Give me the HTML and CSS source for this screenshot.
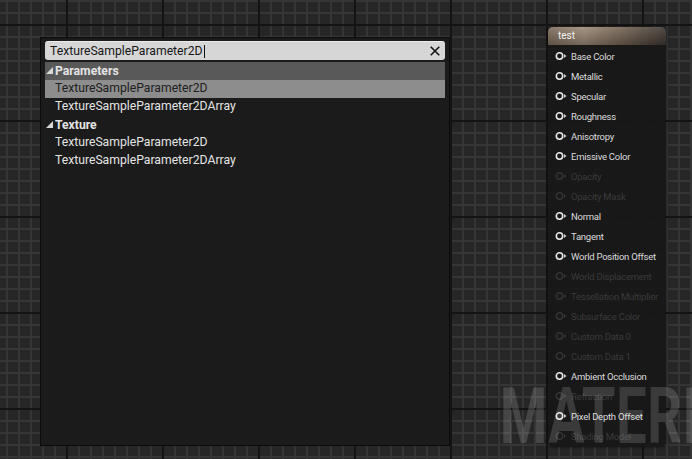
FILE: index.html
```html
<!DOCTYPE html>
<html>
<head>
<meta charset="utf-8">
<link rel="stylesheet" href="styles.css">
</head>
<body>
<div class="canvas">
  <div class="watermark">MATERIAL</div>

  <div class="node">
    <div class="node-title">test</div>
    <div class="node-body">
      <div class="pin on"><svg class="pin-ico" viewBox="0 0 12 10"><circle cx="4.5" cy="5" r="3.2"/><path d="M9 3 L11.5 5 L9 7 Z"/></svg><span>Base Color</span></div>
      <div class="pin on"><svg class="pin-ico" viewBox="0 0 12 10"><circle cx="4.5" cy="5" r="3.2"/><path d="M9 3 L11.5 5 L9 7 Z"/></svg><span>Metallic</span></div>
      <div class="pin on"><svg class="pin-ico" viewBox="0 0 12 10"><circle cx="4.5" cy="5" r="3.2"/><path d="M9 3 L11.5 5 L9 7 Z"/></svg><span>Specular</span></div>
      <div class="pin on"><svg class="pin-ico" viewBox="0 0 12 10"><circle cx="4.5" cy="5" r="3.2"/><path d="M9 3 L11.5 5 L9 7 Z"/></svg><span>Roughness</span></div>
      <div class="pin on"><svg class="pin-ico" viewBox="0 0 12 10"><circle cx="4.5" cy="5" r="3.2"/><path d="M9 3 L11.5 5 L9 7 Z"/></svg><span>Anisotropy</span></div>
      <div class="pin on"><svg class="pin-ico" viewBox="0 0 12 10"><circle cx="4.5" cy="5" r="3.2"/><path d="M9 3 L11.5 5 L9 7 Z"/></svg><span>Emissive Color</span></div>
      <div class="pin off"><svg class="pin-ico" viewBox="0 0 12 10"><circle cx="4.5" cy="5" r="3.2"/><path d="M9 3 L11.5 5 L9 7 Z"/></svg><span>Opacity</span></div>
      <div class="pin off"><svg class="pin-ico" viewBox="0 0 12 10"><circle cx="4.5" cy="5" r="3.2"/><path d="M9 3 L11.5 5 L9 7 Z"/></svg><span>Opacity Mask</span></div>
      <div class="pin on"><svg class="pin-ico" viewBox="0 0 12 10"><circle cx="4.5" cy="5" r="3.2"/><path d="M9 3 L11.5 5 L9 7 Z"/></svg><span>Normal</span></div>
      <div class="pin on"><svg class="pin-ico" viewBox="0 0 12 10"><circle cx="4.5" cy="5" r="3.2"/><path d="M9 3 L11.5 5 L9 7 Z"/></svg><span>Tangent</span></div>
      <div class="pin on"><svg class="pin-ico" viewBox="0 0 12 10"><circle cx="4.5" cy="5" r="3.2"/><path d="M9 3 L11.5 5 L9 7 Z"/></svg><span>World Position Offset</span></div>
      <div class="pin off"><svg class="pin-ico" viewBox="0 0 12 10"><circle cx="4.5" cy="5" r="3.2"/><path d="M9 3 L11.5 5 L9 7 Z"/></svg><span>World Displacement</span></div>
      <div class="pin off"><svg class="pin-ico" viewBox="0 0 12 10"><circle cx="4.5" cy="5" r="3.2"/><path d="M9 3 L11.5 5 L9 7 Z"/></svg><span>Tessellation Multiplier</span></div>
      <div class="pin off"><svg class="pin-ico" viewBox="0 0 12 10"><circle cx="4.5" cy="5" r="3.2"/><path d="M9 3 L11.5 5 L9 7 Z"/></svg><span>Subsurface Color</span></div>
      <div class="pin off"><svg class="pin-ico" viewBox="0 0 12 10"><circle cx="4.5" cy="5" r="3.2"/><path d="M9 3 L11.5 5 L9 7 Z"/></svg><span>Custom Data 0</span></div>
      <div class="pin off"><svg class="pin-ico" viewBox="0 0 12 10"><circle cx="4.5" cy="5" r="3.2"/><path d="M9 3 L11.5 5 L9 7 Z"/></svg><span>Custom Data 1</span></div>
      <div class="pin on"><svg class="pin-ico" viewBox="0 0 12 10"><circle cx="4.5" cy="5" r="3.2"/><path d="M9 3 L11.5 5 L9 7 Z"/></svg><span>Ambient Occlusion</span></div>
      <div class="pin off"><svg class="pin-ico" viewBox="0 0 12 10"><circle cx="4.5" cy="5" r="3.2"/><path d="M9 3 L11.5 5 L9 7 Z"/></svg><span>Refraction</span></div>
      <div class="pin on"><svg class="pin-ico" viewBox="0 0 12 10"><circle cx="4.5" cy="5" r="3.2"/><path d="M9 3 L11.5 5 L9 7 Z"/></svg><span>Pixel Depth Offset</span></div>
      <div class="pin off"><svg class="pin-ico" viewBox="0 0 12 10"><circle cx="4.5" cy="5" r="3.2"/><path d="M9 3 L11.5 5 L9 7 Z"/></svg><span>Shading Model</span></div>
    </div>
  </div>

  <div class="menu">
    <div class="search">
      <span class="search-text">TextureSampleParameter2D</span><span class="caret"></span>
      <svg class="clear" viewBox="0 0 14 14"><path d="M2 2 L12 12 M12 2 L2 12"/></svg>
    </div>
    <div class="list">
      <div class="row header hl"><span class="tri"></span>Parameters</div>
      <div class="row item sel">TextureSampleParameter2D</div>
      <div class="row item">TextureSampleParameter2DArray</div>
      <div class="row header"><span class="tri"></span>Texture</div>
      <div class="row item">TextureSampleParameter2D</div>
      <div class="row item">TextureSampleParameter2DArray</div>
    </div>
  </div>
</div>
</body>
</html>
```

FILE: styles.css
```css
html, body {
  margin: 0;
  padding: 0;
  width: 692px;
  height: 459px;
  overflow: hidden;
}

.canvas {
  position: relative;
  width: 692px;
  height: 459px;
  overflow: hidden;
  font-family: Roboto, "Noto Sans", sans-serif;
  background-color: #262626;
  background-image:
    linear-gradient(to right, #141414 2px, transparent 2px),
    linear-gradient(to bottom, #141414 2px, transparent 2px),
    linear-gradient(to right, #353535 2px, transparent 2px),
    linear-gradient(to bottom, #353535 2px, transparent 2px);
  background-size: 96px 100%, 100% 96px, 12px 100%, 100% 12px;
  background-position: 66px 0, 0 24px, 6px 0, 0 0;
}

/* search popup */
.menu {
  position: absolute;
  left: 40px;
  top: 37px;
  border: 1px solid #0b0b0b;
  background: #1b1b1b;
  padding: 3px 4px 0 4px;
  width: 400px;
  height: 404px;
}

.search {
  display: flex;
  align-items: center;
  height: 19px;
  background: #d6d6d6;
  border-radius: 3px;
  border-top: 1px solid #ececec;
  box-sizing: border-box;
  padding: 0 4px 0 5px;
  color: #161616;
  font-size: 12.2px;
}

.search-text { line-height: 17px; }

.caret {
  display: inline-block;
  width: 1px;
  height: 13px;
  background: #101010;
  margin-left: 1px;
}

.clear {
  margin-left: auto;
  width: 12px;
  height: 12px;
  fill: none;
  stroke: #111;
  stroke-width: 1.8;
}

.list {
  margin-top: 2px;
}

.row {
  height: 18px;
  line-height: 17px;
  font-size: 12.2px;
  color: #e4e4e4;
  white-space: nowrap;
}

.item { padding-left: 10px; }

.header {
  font-weight: bold;
  display: flex;
  align-items: center;
  padding-left: 1px;
}

.hl { background: #595959; }
.sel { background: #8d8d8d; color: #202020; }

.tri {
  width: 0;
  height: 0;
  border-left: 7px solid transparent;
  border-bottom: 7px solid #d8d8d8;
  margin-right: 2px;
  margin-top: -1px;
}

/* material node */
.node {
  position: absolute;
  left: 548px;
  top: 27px;
  width: 118px;
  border-radius: 5px;
  overflow: hidden;
  box-shadow: 0 0 3px rgba(0,0,0,0.6);
}

.node-title {
  height: 18px;
  line-height: 17px;
  padding-left: 10px;
  font-size: 10px;
  color: #f2f2f2;
  background:
    linear-gradient(to bottom, rgba(255,255,255,0.10), rgba(0,0,0,0.25)),
    linear-gradient(to right, #7d6c5b 0%, #9c8a78 30%, #776655 60%, #3e3631 100%);
}

.node-body {
  background: rgba(24,24,24,0.93);
  padding: 1px 0 1px 0;
}

.pin {
  display: flex;
  align-items: center;
  height: 20px;
  padding-left: 7px;
  font-size: 9.5px;
  letter-spacing: -0.25px;
  white-space: nowrap;
}

.pin-ico {
  width: 12px;
  height: 10px;
  margin-right: 4px;
}

.pin-ico circle {
  fill: none;
  stroke-width: 1.6;
}

.pin.on { color: #dcdcdc; }
.pin.on .pin-ico circle { stroke: #e8e8e8; }
.pin.on .pin-ico path { fill: #cfcfcf; }

.pin.off { color: #3a3a3a; }
.pin.off .pin-ico circle { stroke: #333; }
.pin.off .pin-ico path { fill: #333; }

/* watermark */
.watermark {
  position: absolute;
  left: 500px;
  top: 372px;
  font-size: 77px;
  font-weight: bold;
  line-height: 90px;
  color: rgba(255,255,255,0.15);
  transform: scaleX(0.7);
  transform-origin: left top;
  white-space: nowrap;
  z-index: 3;
  letter-spacing: 1px;
}
```
